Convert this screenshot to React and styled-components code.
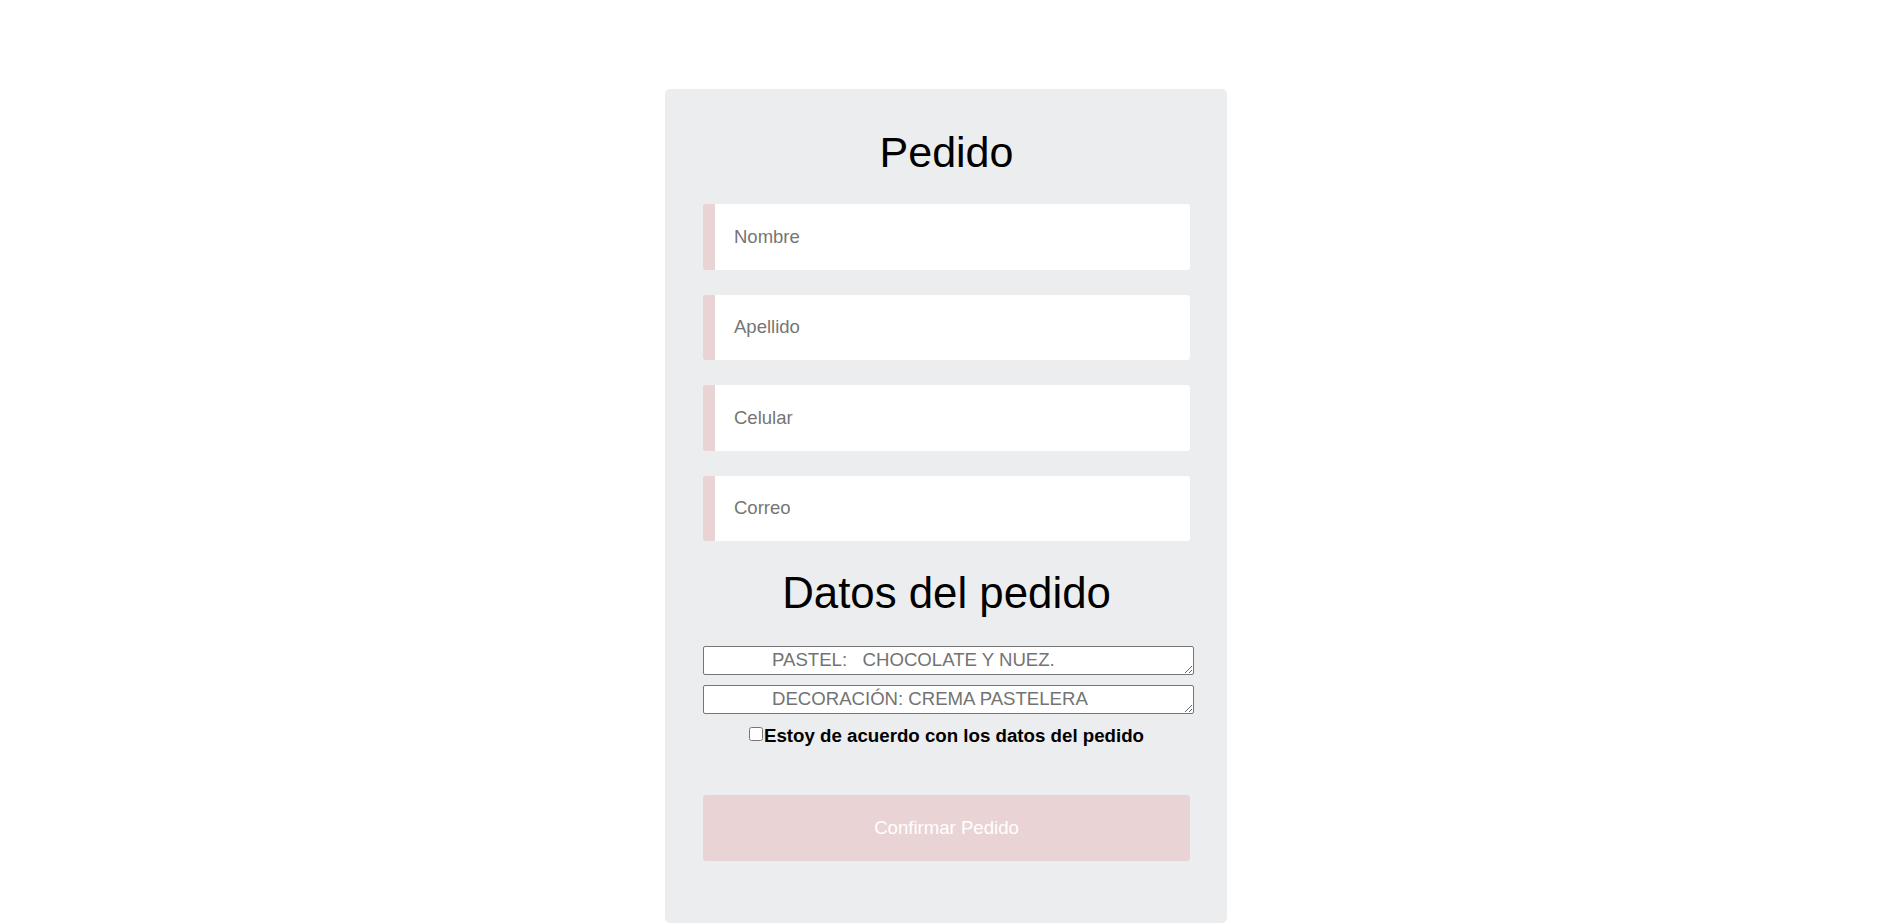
import React from 'react';
import styled, { createGlobalStyle } from 'styled-components';

const fields = [
  { id: 1, name: 'nombre', placeholder: 'Nombre' },
  { id: 2, name: 'apellido', placeholder: 'Apellido' },
  { id: 3, name: 'celular', placeholder: 'Celular' },
  { id: 4, name: 'correo', placeholder: 'Correo' },
];

const details = [
  { id: 1, name: 'pastel', placeholder: 'PASTEL:   CHOCOLATE Y NUEZ.' },
  { id: 2, name: 'decoracion', placeholder: 'DECORACIÓN: CREMA PASTELERA' },
];

const GlobalStyle = createGlobalStyle`
  body {
    margin: 0;
    background: #fff;
    font-family: "Liberation Sans", Arial, sans-serif;
  }
`;

const Page = styled.main`
  display: flex;
  justify-content: center;
  padding-top: 89px;
`;

const Card = styled.form`
  width: 562px;
  box-sizing: border-box;
  padding: 42px 37px 62px 38px;
  background: #ecedef;
  border-radius: 5px;
  display: flex;
  flex-direction: column;
`;

const Title = styled.h1`
  margin: ${props => props.spaced ? '30px 0 0' : '0'};
  font-size: ${props => props.spaced ? '43.8px' : '43px'};
  font-weight: normal;
  line-height: 1;
  text-align: center;
  color: #000;
`;

const Fields = styled.div`
  display: flex;
  flex-direction: column;
  gap: 25px;
  margin-top: 30px;
`;

const Input = styled.input`
  height: 65.5px;
  box-sizing: border-box;
  border: 0;
  border-left: 12px solid #e9d3d5;
  border-radius: 3px;
  padding: 0 0 0 19px;
  background: #fff;
  font-family: inherit;
  font-size: 18.5px;
  outline: 0;

  &::placeholder {
    color: #757575;
  }
`;

const Details = styled.div`
  display: flex;
  flex-direction: column;
  gap: 10px;
  margin-top: 31px;
`;

const TextArea = styled.textarea`
  width: 491px;
  height: 29px;
  box-sizing: border-box;
  margin: 0;
  border: 1px solid #767676;
  border-radius: 2px;
  padding: 2px 2px 2px 68px;
  background: #fff;
  font-family: inherit;
  font-size: 18.6px;
  line-height: 21px;
  overflow: hidden;

  &::placeholder {
    color: #737373;
  }
`;

const Agreement = styled.label`
  display: flex;
  justify-content: center;
  align-items: center;
  margin-top: 11px;
  height: 22px;
  font-size: 18.7px;
  font-weight: bold;
  color: #000;
`;

const Check = styled.input`
  width: 14px;
  height: 14px;
  margin: 0 1px 4px 0;
`;

const Button = styled.button`
  margin-top: 48px;
  height: 66px;
  border: 0;
  border-radius: 3px;
  background: #ead3d5;
  color: #fff;
  font-family: inherit;
  font-size: 18.6px;
`;

const App = () => (
  <>
    <GlobalStyle />
    <Page>
      <Card onSubmit={e => e.preventDefault()}>
        <Title>Pedido</Title>

        <Fields>
          {fields.map(field =>
            <Input key={field.id} name={field.name} placeholder={field.placeholder} />
          )}
        </Fields>

        <Title spaced>Datos del pedido</Title>

        <Details>
          {details.map(item =>
            <TextArea key={item.id} name={item.name} rows={1} placeholder={item.placeholder} />
          )}
        </Details>

        <Agreement>
          <Check type="checkbox" />
          Estoy de acuerdo con los datos del pedido
        </Agreement>

        <Button type="submit">Confirmar Pedido</Button>
      </Card>
    </Page>
  </>
);

export default App;
